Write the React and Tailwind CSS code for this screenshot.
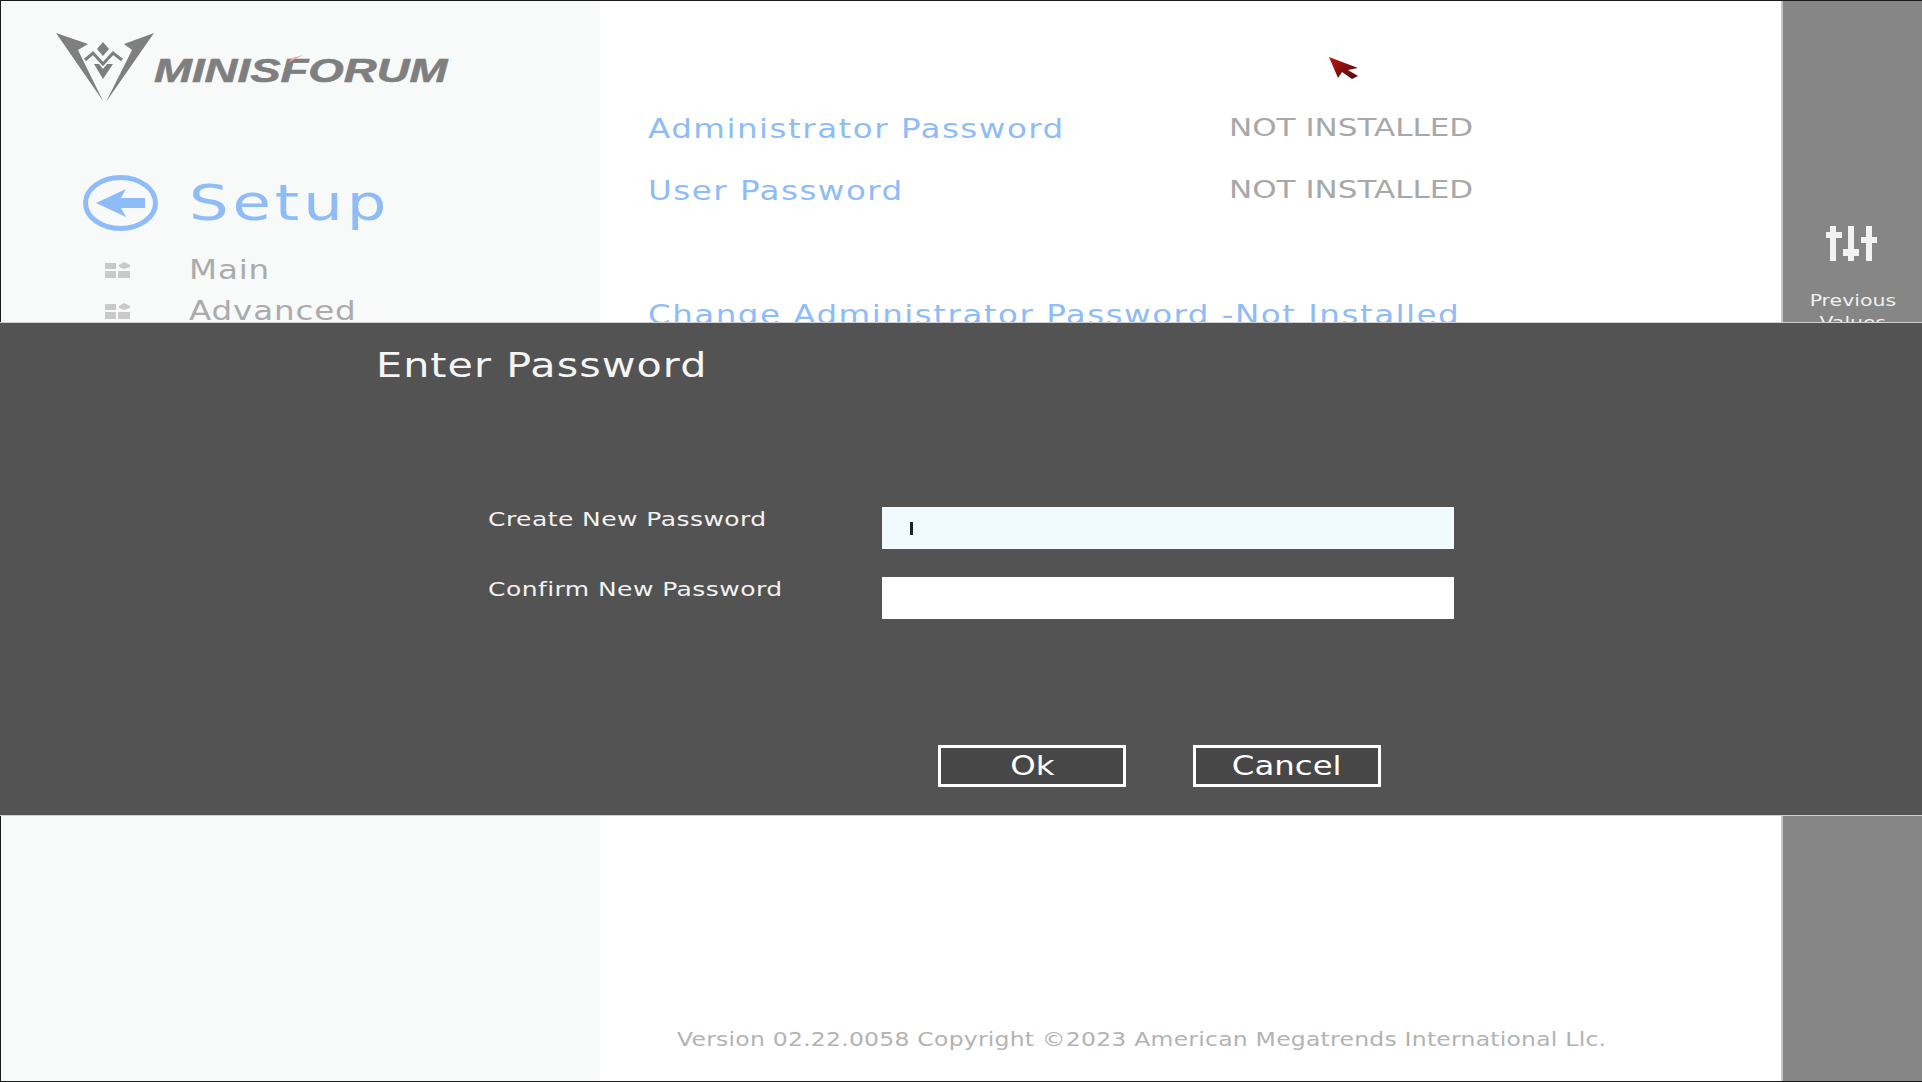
const dejavu = "font-['DejaVu_Sans',sans-serif]";

function Logo() {
  return (
    <div className="relative flex h-[70px] items-start">
      <svg width="98" height="70" viewBox="0 0 98 70" fill="#7f7f7f">
        <polygon points="0,0 32,11 22,17 47,68" />
        <polygon points="98,0 68,11 76,17 50,69" />
        <polygon points="47,9 53,16 47,23 41,16" />
        <polyline points="29,27 37,20 47,31 57,20 66,27" fill="none" stroke="#7f7f7f" strokeWidth="3" />
        <polygon points="38,31 43,31 47,36 51,31 57,31 47,46" />
      </svg>
      <span className="mt-[21px] origin-left scale-x-[1.38] font-['Liberation_Sans',sans-serif] text-[33px] leading-[33px] font-bold italic text-[#7f7f7f] [-webkit-text-stroke:0.6px_#7f7f7f]">
        MINISFORUM
      </span>
      <svg className="absolute left-[232px] top-[22px]" width="15" height="8" viewBox="0 0 15 8">
        <polygon points="0,8 4,3 15,0 7,4" fill="#f2a3ab" />
      </svg>
    </div>
  );
}

function BackIcon() {
  return (
    <svg width="75" height="56" viewBox="0 0 75 56">
      <ellipse cx="37.5" cy="28" rx="35" ry="25.5" fill="none" stroke="#8ebcf8" strokeWidth="5" />
      <polygon points="13,28 43,14 38,23 62,23 62,33 38,33 43,42" fill="#8ebcf8" />
    </svg>
  );
}

function MenuIcon() {
  return (
    <svg width="25" height="16" viewBox="0 0 25 16" fill="#c9c9c9">
      <rect x="0" y="1" width="11" height="6" />
      <polygon points="14,3 19,0 25,3 25,5 19,7 14,5" />
      <rect x="0" y="9" width="11" height="7" />
      <rect x="13" y="9" width="12" height="7" />
    </svg>
  );
}

function MenuRow({ label }) {
  return (
    <div className="flex h-[41px] items-center">
      <div className="w-[84px]">
        <MenuIcon />
      </div>
      <span className={`origin-left scale-x-[1.25] pt-[2px] text-[26px] tracking-[0.7px] text-[#ababab] ${dejavu}`}>{label}</span>
    </div>
  );
}

function Sidebar() {
  return (
    <aside className="flex w-[599px] shrink-0 flex-col bg-[#f8f9f9] pl-[55px] pt-[32px]">
      <Logo />
      <div className="ml-[27px] mt-[72px] flex h-[56px] items-center gap-[31px]">
        <BackIcon />
        <span className={`origin-left scale-x-[1.25] text-[50px] leading-[56px] tracking-[3.1px] text-[#8ebcf8] ${dejavu}`}>Setup</span>
      </div>
      <div className="ml-[49px] mt-[18px] flex flex-col">
        <MenuRow label="Main" />
        <MenuRow label="Advanced" />
      </div>
    </aside>
  );
}

function PasswordRow({ label, value }) {
  return (
    <div className="grid h-[62px] grid-cols-[581px_1fr] items-center">
      <span className={`origin-left scale-x-[1.25] whitespace-nowrap pt-[1px] text-[26px] tracking-[1.2px] text-[#8ebcf8] ${dejavu}`}>{label}</span>
      {value && <span className={`origin-left scale-x-[1.24] whitespace-nowrap pb-[3px] text-[25px] text-[#a8a8a8] ${dejavu}`}>{value}</span>}
    </div>
  );
}

function MainPanel() {
  return (
    <main className="relative flex flex-1 flex-col bg-white pl-[48px] pt-[97px]">
      <PasswordRow label="Administrator Password" value="NOT INSTALLED" />
      <PasswordRow label="User Password" value="NOT INSTALLED" />
      <div className="mt-[62px]">
        <PasswordRow label="Change Administrator Password -Not Installed" />
      </div>
      <p className={`mb-[28px] ml-[29px] mt-auto origin-left scale-x-[1.175] whitespace-nowrap text-[20px] leading-[28px] tracking-[0.2px] text-[#b3b3b3] ${dejavu}`}>
        Version 02.22.0058 Copyright ©2023 American Megatrends International Llc.
      </p>
      {/* mouse pointer */}
      <svg className="absolute left-[729px] top-[56px]" width="30" height="23" viewBox="0 0 30 23">
        <defs>
          <linearGradient id="ptr" x1="0" y1="0" x2="1" y2="1">
            <stop offset="0" stopColor="#c01414" />
            <stop offset="1" stopColor="#4f0a0a" />
          </linearGradient>
        </defs>
        <polygon points="0,0 29,11 19,13 29,19 23,22 13,15 9,21" fill="url(#ptr)" />
      </svg>
    </main>
  );
}

function RightPanel() {
  return (
    <aside className="flex w-[141px] shrink-0 flex-col items-center border-l-2 border-[#c4c4c4] bg-[#858685] pt-[224px]">
      <svg className="mr-[3px]" width="52" height="36" viewBox="0 0 52 36" fill="#f2f2f2">
        <rect x="5" y="1" width="6" height="35" />
        <rect x="1" y="7" width="16" height="6" />
        <rect x="23" y="1" width="6" height="35" />
        <rect x="18" y="24" width="16" height="7" />
        <rect x="41" y="1" width="6" height="35" />
        <rect x="36" y="12" width="16" height="6" />
      </svg>
      <p className={`mt-[29px] scale-x-[1.24] text-center text-[16.5px] leading-[22px] text-[#f0f0f0] ${dejavu}`}>
        Previous
        <br />
        Values
      </p>
    </aside>
  );
}

function DialogButton({ children }) {
  return (
    <button className={`h-[42px] w-[188px] border-[3px] border-white bg-[#474747] text-[27px] leading-[30px] text-white ${dejavu}`}>
      <span className="inline-block scale-x-[1.2]">{children}</span>
    </button>
  );
}

function Field({ label, focused }) {
  return (
    <div className="flex h-[42px] items-start">
      <span className={`w-[394px] origin-left scale-x-[1.25] text-[20px] leading-[24px] tracking-[0.35px] text-[#f2f2f2] ${dejavu}`}>{label}</span>
      <div className={`flex h-[42px] w-[572px] items-center pl-[28px] ${focused ? "bg-[#f0faff]" : "bg-white"}`}>
        {focused && <div className="h-[13px] w-[3px] bg-[#222222]" />}
      </div>
    </div>
  );
}

function PasswordDialog() {
  return (
    <section className="absolute inset-x-0 top-[322px] h-[494px] border-y border-[#d0d0d0] bg-[#535353] pl-[376px] pt-[21px]">
      <h2 className={`origin-left scale-x-[1.25] text-[33px] leading-[44px] tracking-[0.85px] text-[#f5f5f5] ${dejavu}`}>Enter Password</h2>
      <div className="ml-[112px] mt-[119px] flex flex-col gap-[28px]">
        <Field label="Create New Password" focused />
        <Field label="Confirm New Password" />
      </div>
      <div className="ml-[562px] mt-[126px] flex gap-[67px]">
        <DialogButton>Ok</DialogButton>
        <DialogButton>Cancel</DialogButton>
      </div>
    </section>
  );
}

export default function App() {
  return (
    <div className="relative h-[1082px] w-[1922px] overflow-hidden bg-white">
      <div className="flex h-full border-y border-l border-[#1a1a1a]">
        <Sidebar />
        <MainPanel />
        <RightPanel />
      </div>
      <PasswordDialog />
    </div>
  );
}
